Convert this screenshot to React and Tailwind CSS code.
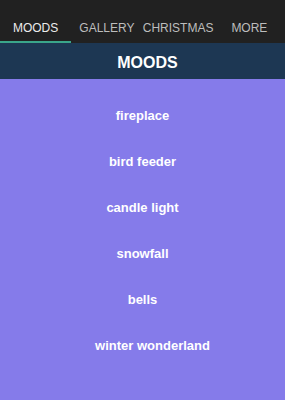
const tabs = ['MOODS', 'GALLERY', 'CHRISTMAS', 'MORE'];

const moods = ['fireplace', 'bird feeder', 'candle light', 'snowfall', 'bells', 'winter wonderland'];

const App = () => {
  return (
    <div className="w-[285px] h-[400px] flex flex-col bg-[#857bea] font-['Liberation_Sans',Arial,sans-serif]">
      <div className="grid grid-cols-4 h-[43px] bg-[#212121]">
        {tabs.map((tab, i) => (
          <div
            key={tab}
            className={`flex items-center justify-center pt-[14px] text-[12px] border-b-2 ${
              i === 0 ? 'text-[#ececec] border-[#3aa58a]' : 'text-[#bdbdbd] border-transparent'
            }`}
          >
            {tab}
          </div>
        ))}
      </div>

      <div className="h-[36px] flex items-center justify-center pt-[3px] pl-[10px] bg-[#1d3753] text-white font-bold text-[16px]">
        MOODS
      </div>

      <div className="flex flex-col items-center pt-[14px]">
        {moods.map((mood, i) => (
          <div
            key={mood}
            className={`h-[46px] flex items-center text-white font-bold text-[13px] ${i === 5 ? 'pl-[20px]' : ''}`}
          >
            {mood}
          </div>
        ))}
      </div>
    </div>
  );
};

export default App;
